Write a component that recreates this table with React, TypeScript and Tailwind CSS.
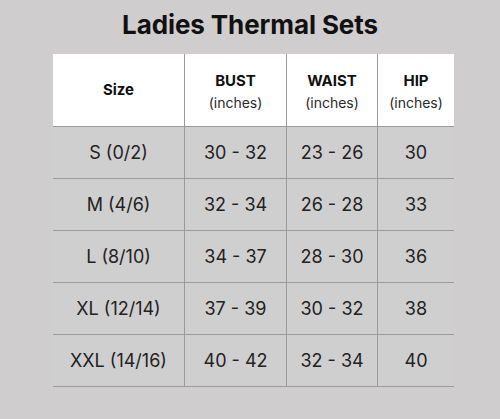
const rows = [
  ['S (0/2)', '30 - 32', '23 - 26', '30'],
  ['M (4/6)', '32 - 34', '26 - 28', '33'],
  ['L (8/10)', '34 - 37', '28 - 30', '36'],
  ['XL (12/14)', '37 - 39', '30 - 32', '38'],
  ['XXL (14/16)', '40 - 42', '32 - 34', '40'],
]

const cols = ['w-[131px]', 'w-[102px]', 'w-[91px]', 'w-[77px]']

function HeadCell({ title, sub, i }: { title: string; sub?: string; i: number }) {
  return (
    <div
      className={`${cols[i]} flex flex-col items-center justify-center ${sub ? 'pt-[3px]' : ''} ${i > 0 ? 'border-l border-[#9c9b9b]' : ''}`}
    >
      <span className="text-[15px] font-bold leading-[20px] text-[#111]">{title}</span>
      {sub && <span className="text-[14px] leading-[20px] mt-[2px] text-[#2a2a2a]">{sub}</span>}
    </div>
  )
}

export default function App() {
  return (
    <div
      className="w-[500px] h-[419px] bg-[#cfcdce] flex flex-col items-center"
      style={{ fontFamily: 'Inter, "Liberation Sans", sans-serif' }}
    >
      <h1 className="mt-[8px] h-[46px] text-[26px] font-bold text-[#111] leading-[34px] tracking-[-0.1px]">
        Ladies Thermal Sets
      </h1>
      <div className="w-[401px] ml-[7px] flex flex-col">
        <div className="h-[73px] bg-white flex border-b border-[#9c9b9b]">
          <HeadCell title="Size" i={0} />
          <HeadCell title="BUST" sub="(inches)" i={1} />
          <HeadCell title="WAIST" sub="(inches)" i={2} />
          <HeadCell title="HIP" sub="(inches)" i={3} />
        </div>
        {rows.map((r) => (
          <div key={r[0]} className="h-[52px] flex border-b border-[#9c9b9b] bg-[#d0cfcf]">
            {r.map((c, i) => (
              <div
                key={i}
                className={`${cols[i]} flex items-center justify-center text-[18px] text-[#222] ${i > 0 ? 'border-l border-[#9c9b9b]' : ''}`}
              >
                {c}
              </div>
            ))}
          </div>
        ))}
      </div>
    </div>
  )
}
